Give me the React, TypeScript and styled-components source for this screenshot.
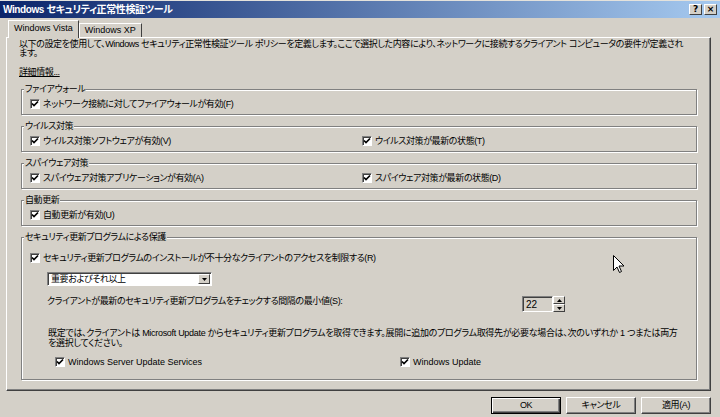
import * as React from 'react'
import styled, { createGlobalStyle } from 'styled-components'

const GlobalStyle = createGlobalStyle`
  html, body {
    margin: 0;
    padding: 0;
    background: #d4d0c8;
  }
  body {
    font-family: 'Liberation Sans', 'Noto Sans CJK JP', sans-serif;
    font-size: 9px;
    letter-spacing: -0.4px;
    color: #000;
    font-feature-settings: 'palt';
  }
`

const Window = styled.div`
  position: relative;
  width: 720px;
  height: 417px;
  background: #d4d0c8;
  display: flex;
  flex-direction: column;
  overflow: hidden;
`

const TitleBar = styled.div`
  height: 17px;
  display: flex;
  align-items: center;
  padding: 0 3px;
  border-top: 1px solid #e4e2dc;
  background: linear-gradient(to right, #0a246a, #a6caf0);
`

const TitleText = styled.div`
  flex: 1;
  color: #fff;
  font-weight: bold;
  font-size: 10px;
  letter-spacing: -0.4px;
  line-height: 17px;
  white-space: nowrap;
`

const CaptionButton = styled.div`
  width: 13px;
  height: 11px;
  box-sizing: border-box;
  margin-left: 2px;
  background: #d4d0c8;
  border: 1px solid;
  border-color: #fff #404040 #404040 #fff;
  font-family: 'DejaVu Sans', sans-serif;
  font-size: 9px;
  font-weight: bold;
  letter-spacing: 0;
  line-height: 9px;
  text-align: center;
`

const Body = styled.div`
  flex: 1;
  display: flex;
  flex-direction: column;
  padding: 2px 9px 0 6px;
`

const TabStrip = styled.div`
  height: 17px;
  display: flex;
  align-items: flex-end;
  padding-left: 2px;
`

const Tab = styled.div<{ $active?: boolean }>`
  position: relative;
  z-index: ${(p) => (p.$active ? 1 : 0)};
  height: ${(p) => (p.$active ? '18px' : '14px')};
  margin-bottom: ${(p) => (p.$active ? '-1px' : '0')};
  box-sizing: border-box;
  padding: 0 5px;
  background: #d4d0c8;
  border: 1px solid;
  border-color: #fff #404040 transparent #fff;
  border-bottom: none;
  letter-spacing: 0;
  line-height: ${(p) => (p.$active ? '15px' : '13px')};
  white-space: nowrap;
`

const Panel = styled.div`
  height: 354px;
  box-sizing: border-box;
  padding: 0 12px;
  border: 1px solid;
  border-color: #fff #404040 #404040 #fff;
  box-shadow: inset -1px -1px 0 #808080;
  display: flex;
  flex-direction: column;
`

const Description = styled.div`
  margin-top: 2px;
  line-height: 9px;
  white-space: nowrap;
`

const MoreInfo = styled.div`
  margin-top: 9px;
  line-height: 10px;
  text-decoration: underline;
`

const Groups = styled.div`
  margin: 7px 1px 0 2px;
  display: flex;
  flex-direction: column;
  gap: 6px;
`

const Group = styled.fieldset`
  margin: 0;
  min-width: 0;
  padding: 4px 8px 4px 8px;
  border: 1px solid #808080;
  box-shadow: 1px 1px 0 #fff, inset 1px 1px 0 #fff;
`

const Legend = styled.legend`
  margin-left: -6px;
  padding: 0 1px;
  line-height: 10px;
  background: #d4d0c8;
`

const Columns = styled.div<{ $first: number }>`
  display: grid;
  grid-template-columns: ${(p) => p.$first}px auto;
`

const CheckRow = styled.label<{ $latin?: boolean }>`
  display: flex;
  align-items: center;
  gap: 3px;
  height: 12px;
  line-height: 12px;
  letter-spacing: ${(p) => (p.$latin ? '0' : '-0.4px')};
  white-space: nowrap;
`

const Box = styled.span`
  width: 10px;
  height: 10px;
  box-sizing: border-box;
  background: #fff;
  border: 1px solid;
  border-color: #808080 #fff #fff #808080;
  box-shadow: inset 1px 1px 0 #404040;
  display: inline-flex;
  align-items: center;
  justify-content: center;
  flex: none;
`

const SecurityRow = styled.div`
  margin-top: 6px;
`

const Select = styled.div`
  margin: 8px 0 0 17px;
  width: 165px;
  height: 14px;
  box-sizing: border-box;
  background: #fff;
  border: 1px solid;
  border-color: #808080 #fff #fff #808080;
  box-shadow: inset 1px 1px 0 #404040;
  display: flex;
  align-items: center;
  padding: 0 1px 0 3px;
  line-height: 12px;
`

const SelectText = styled.span`
  flex: 1;
`

const SelectButton = styled.span`
  width: 12px;
  height: 10px;
  box-sizing: border-box;
  background: #d4d0c8;
  border: 1px solid;
  border-color: #fff #404040 #404040 #fff;
  display: flex;
  align-items: center;
  justify-content: center;
`

const IntervalRow = styled.div`
  margin: 10px 0 0 17px;
  display: grid;
  grid-template-columns: 475px auto;
  line-height: 10px;
`

const Spin = styled.div`
  display: flex;
  height: 16px;
`

const SpinField = styled.div`
  width: 31px;
  box-sizing: border-box;
  border: 1px solid;
  border-color: #808080 #fff #fff #808080;
  box-shadow: inset 1px 1px 0 #404040;
  padding: 2px 0 0 3px;
  font-size: 10px;
  letter-spacing: 0;
  line-height: 11px;
`

const SpinButtons = styled.div`
  width: 12px;
  display: flex;
  flex-direction: column;
`

const SpinButton = styled.span`
  flex: 1;
  background: #d4d0c8;
  border: 1px solid;
  border-color: #fff #404040 #404040 #fff;
  display: flex;
  align-items: center;
  justify-content: center;
`

const Note = styled.div`
  margin: 16px 0 0 18px;
  line-height: 10px;
  letter-spacing: -0.3px;
  white-space: nowrap;
`

const SourceRow = styled.div`
  margin: 8px 0 7px 25px;
`

const Footer = styled.div`
  display: flex;
  justify-content: flex-end;
  gap: 5px;
  padding-top: 6px;
`

const Button = styled.div<{ $default?: boolean }>`
  width: 70px;
  height: 17px;
  box-sizing: border-box;
  border: 1px solid;
  border-color: ${(p) => (p.$default ? '#000' : '#fff #404040 #404040 #fff')};
  box-shadow: ${(p) =>
    p.$default
      ? 'inset 1px 1px 0 #fff, inset -1px -1px 0 #404040, inset -2px -2px 0 #808080'
      : 'inset -1px -1px 0 #808080'};
  text-align: center;
  line-height: 15px;
`

const Cursor = styled.svg`
  position: absolute;
  left: 613px;
  top: 255px;
`

const Check = ({
  children,
  latin,
}: {
  children: React.ReactNode
  latin?: boolean
}) => (
  <CheckRow $latin={latin}>
    <Box>
      <svg width="8" height="8" viewBox="0 0 8 8">
        <polyline
          points="1,3.5 3,5.5 7,1.5"
          fill="none"
          stroke="#000"
          strokeWidth="1.7"
        />
      </svg>
    </Box>
    {children}
  </CheckRow>
)

const Arrow = ({ up }: { up?: boolean }) => (
  <svg width="5" height="3" viewBox="0 0 5 3">
    <polygon points={up ? '2.5,0 5,3 0,3' : '0,0 5,0 2.5,3'} fill="#000" />
  </svg>
)

export default function App() {
  return (
    <Window>
      <GlobalStyle />
      <TitleBar>
        <TitleText>Windows セキュリティ正常性検証ツール</TitleText>
        <CaptionButton>?</CaptionButton>
        <CaptionButton>×</CaptionButton>
      </TitleBar>
      <Body>
        <TabStrip>
          <Tab $active>Windows Vista</Tab>
          <Tab>Windows XP</Tab>
        </TabStrip>
        <Panel>
          <Description>
            以下の設定を使用して、Windows セキュリティ正常性検証ツール
            ポリシーを定義します。ここで選択した内容により、ネットワークに接続するクライアント
            コンピュータの要件が定義され
            <br />
            ます。
          </Description>
          <MoreInfo>詳細情報...</MoreInfo>
          <Groups>
            <Group>
              <Legend>ファイアウォール</Legend>
              <Check>ネットワーク接続に対してファイアウォールが有効(F)</Check>
            </Group>
            <Group>
              <Legend>ウイルス対策</Legend>
              <Columns $first={332}>
                <Check>ウイルス対策ソフトウェアが有効(V)</Check>
                <Check>ウイルス対策が最新の状態(T)</Check>
              </Columns>
            </Group>
            <Group>
              <Legend>スパイウェア対策</Legend>
              <Columns $first={332}>
                <Check>スパイウェア対策アプリケーションが有効(A)</Check>
                <Check>スパイウェア対策が最新の状態(D)</Check>
              </Columns>
            </Group>
            <Group>
              <Legend>自動更新</Legend>
              <Check>自動更新が有効(U)</Check>
            </Group>
            <Group>
              <Legend>セキュリティ更新プログラムによる保護</Legend>
              <SecurityRow>
                <Check>
                  セキュリティ更新プログラムのインストールが不十分なクライアントのアクセスを制限する(R)
                </Check>
              </SecurityRow>
              <Select>
                <SelectText>重要およびそれ以上</SelectText>
                <SelectButton>
                  <Arrow />
                </SelectButton>
              </Select>
              <IntervalRow>
                <span>
                  クライアントが最新のセキュリティ更新プログラムをチェックする間隔の最小値(S):
                </span>
                <Spin>
                  <SpinField>22</SpinField>
                  <SpinButtons>
                    <SpinButton>
                      <Arrow up />
                    </SpinButton>
                    <SpinButton>
                      <Arrow />
                    </SpinButton>
                  </SpinButtons>
                </Spin>
              </IntervalRow>
              <Note>
                既定では、クライアントは Microsoft Update
                からセキュリティ更新プログラムを取得できます。展開に追加のプログラム取得先が必要な場合は、次のいずれか
                1 つまたは両方
                <br />
                を選択してください。
              </Note>
              <SourceRow>
                <Columns $first={345}>
                  <Check latin>Windows Server Update Services</Check>
                  <Check latin>Windows Update</Check>
                </Columns>
              </SourceRow>
            </Group>
          </Groups>
        </Panel>
        <Footer>
          <Button $default>OK</Button>
          <Button>キャンセル</Button>
          <Button>適用(A)</Button>
        </Footer>
      </Body>
      <Cursor width="12" height="19" viewBox="0 0 12 19">
        <path
          d="M0.5 0.5 L0.5 15.5 L4 12 L6.5 17.5 L8.5 16.5 L6 11 L11 11 Z"
          fill="#fff"
          stroke="#000"
          strokeWidth="1"
          strokeLinejoin="miter"
        />
      </Cursor>
    </Window>
  )
}
